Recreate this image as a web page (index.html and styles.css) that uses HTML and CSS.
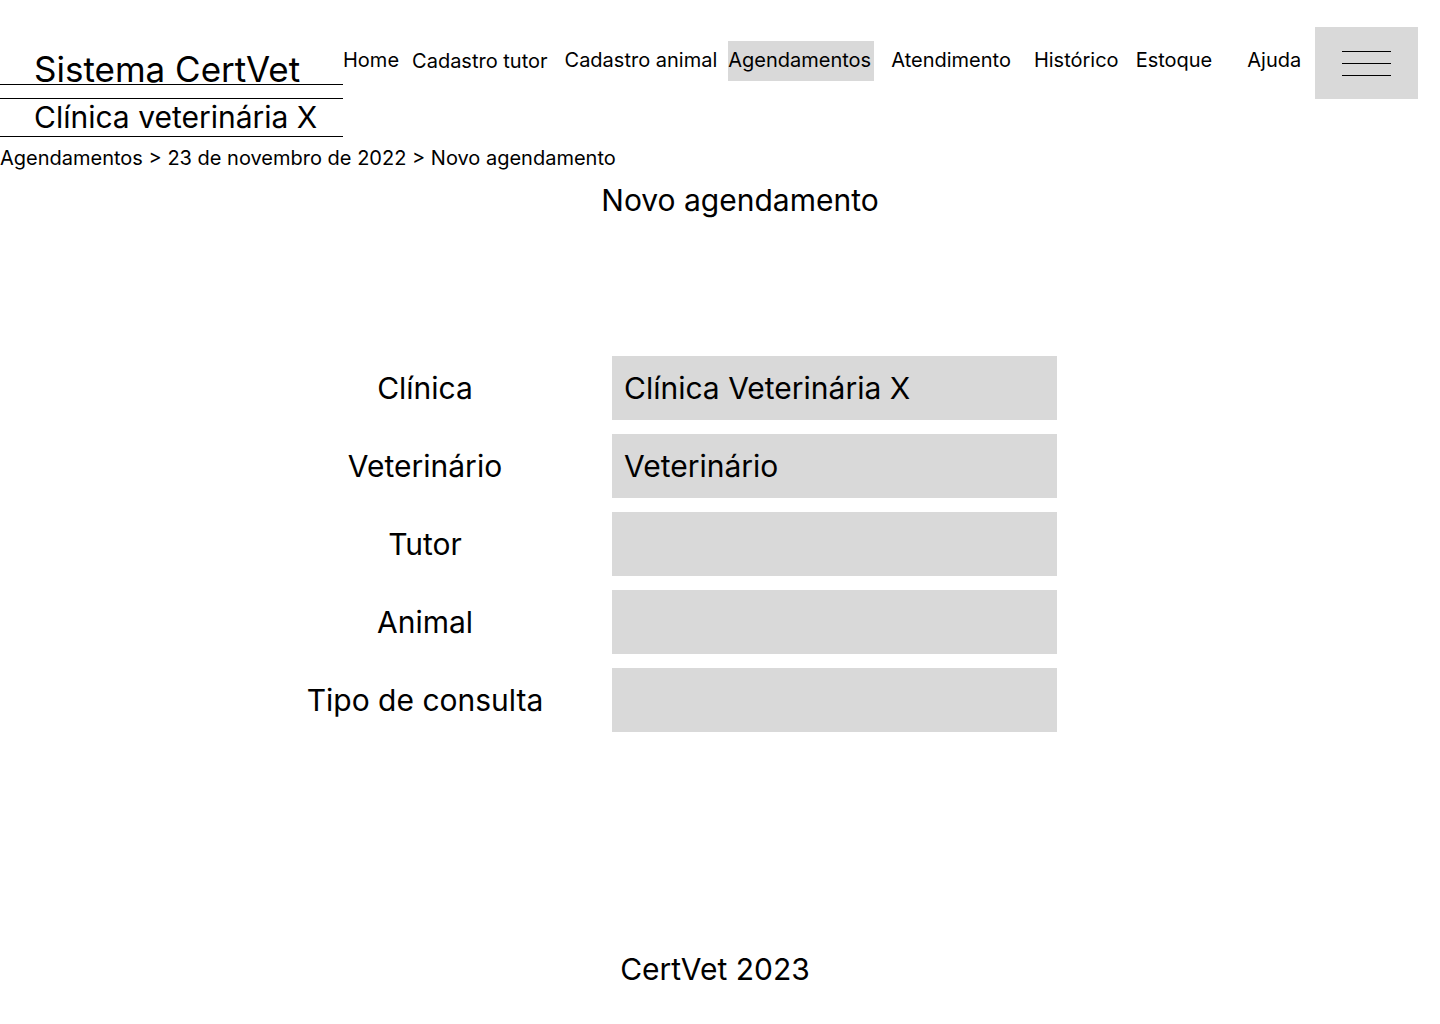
FILE: index.html
```html
<!DOCTYPE html>
<html lang="pt-BR">
<head>
<meta charset="utf-8">
<title>Sistema CertVet - Novo agendamento</title>
<link rel="stylesheet" href="styles.css">
</head>
<body>
<header class="topbar">
  <div class="brand">
    <div class="brand-title">Sistema CertVet</div>
    <div class="brand-sub">Clínica veterinária X</div>
  </div>
  <nav class="nav">
    <a class="nav-item nav-home">Home</a>
    <a class="nav-item nav-tutor">Cadastro tutor</a>
    <a class="nav-item nav-animal">Cadastro animal</a>
    <a class="nav-item nav-agenda active">Agendamentos</a>
    <a class="nav-item nav-atend">Atendimento</a>
    <a class="nav-item nav-hist">Histórico</a>
    <a class="nav-item nav-estoque">Estoque</a>
    <a class="nav-item nav-ajuda">Ajuda</a>
  </nav>
  <button class="menu-btn" aria-label="Menu">
    <span class="menu-line"></span>
    <span class="menu-line"></span>
    <span class="menu-line"></span>
  </button>
</header>
<div class="breadcrumb">Agendamentos &gt; 23 de novembro de 2022 &gt; Novo agendamento</div>
<h1 class="page-title">Novo agendamento</h1>
<main class="form">
  <div class="label">Clínica</div>
  <div class="field">Clínica Veterinária X</div>
  <div class="label">Veterinário</div>
  <div class="field">Veterinário</div>
  <div class="label">Tutor</div>
  <div class="field"></div>
  <div class="label">Animal</div>
  <div class="field"></div>
  <div class="label">Tipo de consulta</div>
  <div class="field"></div>
</main>
<footer class="footer">CertVet 2023</footer>
</body>
</html>
```

FILE: styles.css
```css
* { box-sizing: border-box; }
html, body { margin: 0; padding: 0; }
body {
  width: 1440px;
  height: 1024px;
  font-family: Inter, "Noto Sans", sans-serif;
  color: #000;
  background: #fff;
  overflow: hidden;
}
.topbar {
  display: flex;
  align-items: flex-start;
  padding-top: 27px;
}
.brand {
  width: 343px;
  flex: none;
  padding-top: 27px;
}
.brand-title {
  font-size: 35px;
  line-height: 30px;
  padding-left: 34px;
  border-bottom: 1px solid #000;
}
.brand-sub {
  margin-top: 13px;
  font-size: 30px;
  line-height: 37px;
  padding-left: 34px;
  border-top: 1px solid #000;
  border-bottom: 1px solid #000;
}
.nav {
  display: flex;
  align-items: flex-start;
  padding-top: 14px;
}
.nav-item {
  font-size: 20px;
  line-height: 38px;
  height: 40px;
  white-space: nowrap;
}
.nav-tutor { margin-left: 13px; margin-top: 1px; }
.nav-animal { margin-left: 17px; }
.nav-agenda { margin-left: 11px; padding: 0 3px 0 0; }
.nav-atend { margin-left: 17px; }
.nav-hist { margin-left: 23px; }
.nav-estoque { margin-left: 17px; }
.nav-ajuda { margin-left: 35px; }
.active { background: #d9d9d9; width: 146px; }
.menu-btn {
  margin-left: 14px;
  width: 103px;
  height: 72px;
  border: 0;
  padding: 0;
  background: #d9d9d9;
  display: flex;
  flex-direction: column;
  align-items: center;
  justify-content: center;
  gap: 11px;
}
.menu-line {
  display: block;
  width: 49px;
  height: 1px;
  background: #000;
}
.breadcrumb {
  margin-top: 9px;
  font-size: 20px;
  line-height: 24px;
}
.page-title {
  margin: 12px 0 0;
  padding-left: 40px;
  text-align: center;
  font-weight: 400;
  font-size: 30px;
  line-height: 36px;
}
.form {
  margin-top: 138px;
  display: grid;
  grid-template-columns: 250px 445px;
  column-gap: 62px;
  row-gap: 14px;
  padding-left: 300px;
}
.label {
  height: 64px;
  display: flex;
  align-items: center;
  justify-content: center;
  font-size: 30px;
  white-space: nowrap;
}
.field {
  height: 64px;
  background: #d9d9d9;
  display: flex;
  align-items: center;
  padding-left: 12px;
  font-size: 30px;
}
.footer {
  margin-top: 219px;
  text-align: center;
  padding-right: 10px;
  font-size: 30px;
  line-height: 36px;
}
```
